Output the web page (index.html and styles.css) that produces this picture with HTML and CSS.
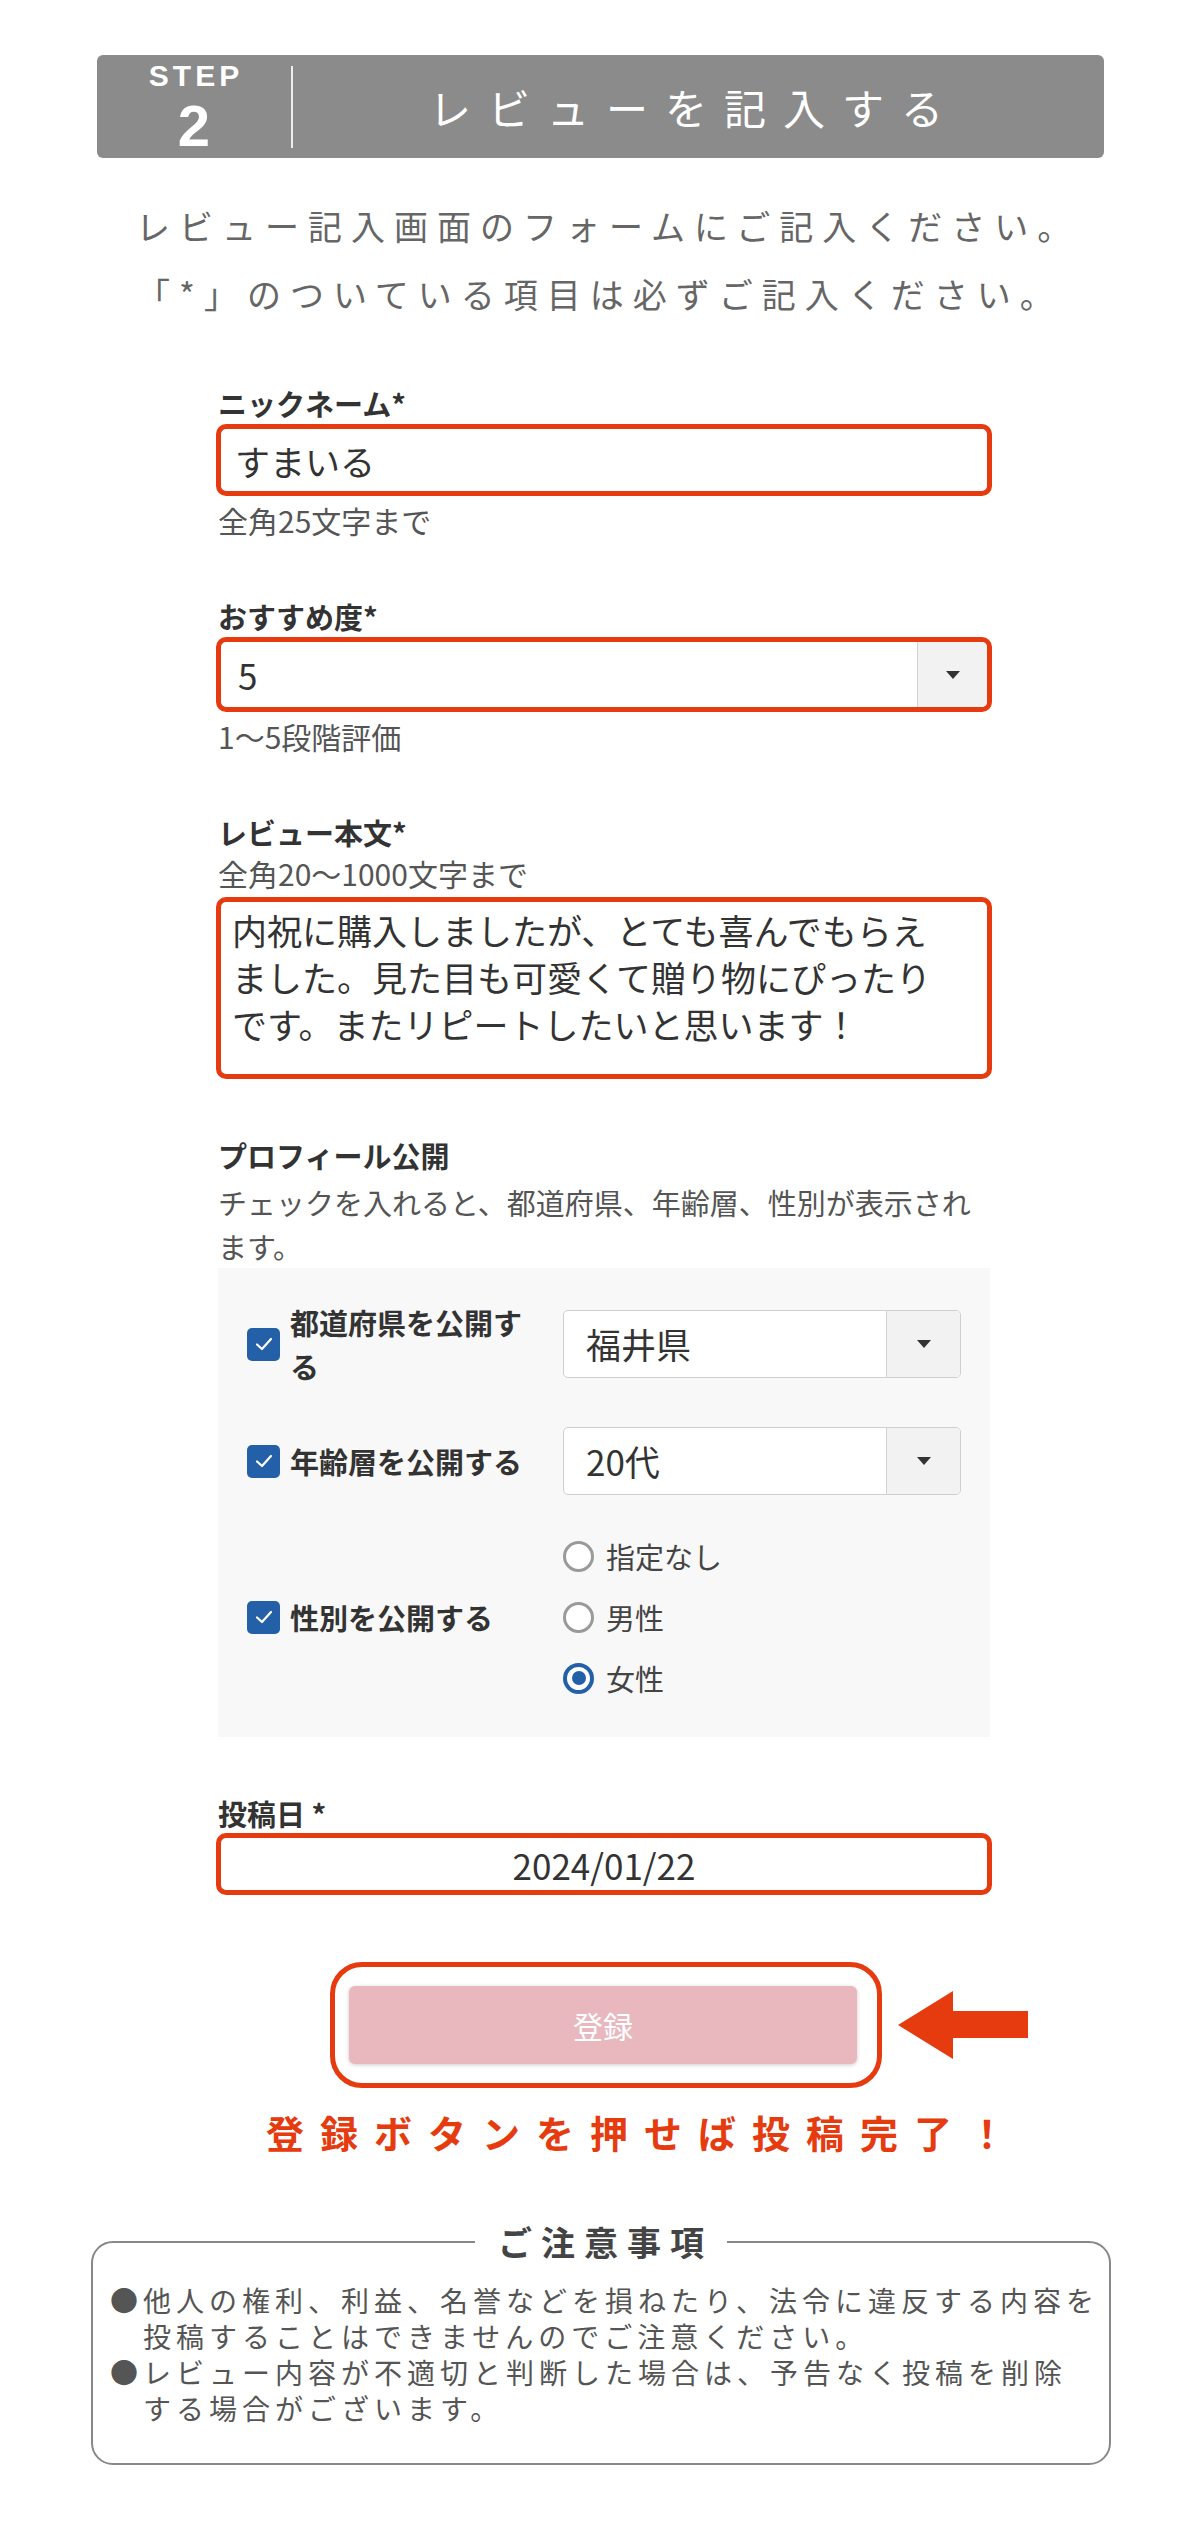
FILE: index.html
```html
<!DOCTYPE html>
<html lang="ja">
<head>
    <meta charset="UTF-8">
    <meta name="viewport" content="width=device-width, initial-scale=1.0">
    <title>レビューを記入する</title>
    <link rel="stylesheet" href="styles.css">
</head>
<body>
    <div class="step-head">
        <div class="step-num">
            <span class="step-label">STEP</span>
            <span class="step-no">2</span>
        </div>
        <div class="step-divider"></div>
        <h2 class="step-title">レビューを記入する</h2>
    </div>

    <p class="intro">レビュー記入画面のフォームにご記入ください。<br>「*」のついている項目は必ずご記入ください。</p>

    <form class="review-form">
        <div class="fields">
            <!-- Nickname -->
            <div class="field">
                <label class="field-label" for="nickname">ニックネーム*</label>
                <input type="text" id="nickname" class="text-input mark" value="すまいる">
                <p class="help">全角25文字まで</p>
            </div>

            <!-- Rating -->
            <div class="field">
                <label class="field-label">おすすめ度*</label>
                <div class="select mark">
                    <span class="select-value">5</span>
                    <span class="select-arrow"></span>
                </div>
                <p class="help">1〜5段階評価</p>
            </div>

            <!-- Review body -->
            <div class="field">
                <label class="field-label" for="review-body">レビュー本文*</label>
                <p class="help help-top">全角20〜1000文字まで</p>
                <textarea id="review-body" class="textarea mark">内祝に購入しましたが、とても喜んでもらえました。見た目も可愛くて贈り物にぴったりです。またリピートしたいと思います！</textarea>
            </div>

            <!-- Profile -->
            <div class="field">
                <span class="field-label">プロフィール公開</span>
                <p class="help-desc">チェックを入れると、都道府県、年齢層、性別が表示されます。</p>
                <div class="profile-panel">
                    <div class="profile-row">
                        <label class="check">
                            <span class="checkbox"><svg width="22" height="22" viewBox="0 0 22 22"><polyline points="4,11.5 9,16 18,6" fill="none" stroke="#fff" stroke-width="2.2" stroke-linecap="round" stroke-linejoin="round"/></svg></span>
                            <span class="check-text">都道府県を公開する</span>
                        </label>
                        <div class="select select-sm">
                            <span class="select-value">福井県</span>
                            <span class="select-arrow"></span>
                        </div>
                    </div>
                    <div class="profile-row">
                        <label class="check">
                            <span class="checkbox"><svg width="22" height="22" viewBox="0 0 22 22"><polyline points="4,11.5 9,16 18,6" fill="none" stroke="#fff" stroke-width="2.2" stroke-linecap="round" stroke-linejoin="round"/></svg></span>
                            <span class="check-text">年齢層を公開する</span>
                        </label>
                        <div class="select select-sm">
                            <span class="select-value">20代</span>
                            <span class="select-arrow"></span>
                        </div>
                    </div>
                    <div class="profile-row">
                        <label class="check">
                            <span class="checkbox"><svg width="22" height="22" viewBox="0 0 22 22"><polyline points="4,11.5 9,16 18,6" fill="none" stroke="#fff" stroke-width="2.2" stroke-linecap="round" stroke-linejoin="round"/></svg></span>
                            <span class="check-text">性別を公開する</span>
                        </label>
                        <div class="radios">
                            <label class="radio-item"><span class="radio"></span>指定なし</label>
                            <label class="radio-item"><span class="radio"></span>男性</label>
                            <label class="radio-item"><span class="radio is-checked"></span>女性</label>
                        </div>
                    </div>
                </div>
            </div>

            <!-- Post date -->
            <div class="field">
                <label class="field-label" for="post-date">投稿日 *</label>
                <input type="text" id="post-date" class="text-input date-input mark" value="2024/01/22">
            </div>
        </div>

        <div class="submit-row">
            <div class="submit-frame">
                <button type="submit" class="submit-btn">登録</button>
            </div>
            <svg class="arrow" width="130" height="68" viewBox="0 0 130 68">
                <polygon points="0,34 55,0 55,20 130,20 130,47 55,47 55,68" fill="#e63a0f"/>
            </svg>
        </div>
        <p class="submit-note">登録ボタンを押せば投稿完了！</p>
    </form>

    <fieldset class="notes">
        <legend>ご注意事項</legend>
        <ul>
            <li>●他人の権利、利益、名誉などを損ねたり、法令に違反する内容を投稿することはできませんのでご注意ください。</li>
            <li>●レビュー内容が不適切と判断した場合は、予告なく投稿を削除<br>する場合がございます。</li>
        </ul>
    </fieldset>
</body>
</html>
```

FILE: styles.css
```css
* {
    box-sizing: border-box;
}

body {
    margin: 0;
    font-family: "Noto Sans CJK JP", "Noto Sans", sans-serif;
    color: #333;
    background: #fff;
}

/* Step header */
.step-head {
    display: flex;
    align-items: center;
    height: 103px;
    margin: 55px 96px 0 97px;
    background: #8b8b8b;
    border-radius: 6px;
    color: #fff;
}

.step-num {
    width: 194px;
    display: flex;
    flex-direction: column;
    align-items: center;
    font-family: "Liberation Sans", Arial, sans-serif;
    font-weight: 700;
}

.step-label {
    font-size: 30px;
    line-height: 30px;
    letter-spacing: 4px;
    padding-left: 4px;
}

.step-no {
    font-size: 58px;
    line-height: 52px;
    margin-top: 9px;
}

.step-divider {
    width: 2px;
    height: 82px;
    background: rgba(255, 255, 255, 0.85);
}

.step-title {
    flex: 1;
    margin: 0;
    padding-right: 8px;
    font-size: 42px;
    font-weight: 400;
    letter-spacing: 17px;
    line-height: 1;
    text-align: center;
}

.intro {
    margin: 34px 0 0 136px;
    font-size: 34px;
    line-height: 68px;
    letter-spacing: 9px;
    color: #666;
}

/* Form */
.fields {
    width: 772px;
    margin: 55px 0 0 218px;
}

.field + .field {
    margin-top: 56px;
}

.field-label {
    display: block;
    font-size: 29px;
    font-weight: 700;
    line-height: 40px;
    color: #333;
}

.help {
    margin: 4px 0 0;
    font-size: 30px;
    line-height: 40px;
    color: #555;
}

.help-top {
    margin: 1px 0 4px;
}

.help-desc {
    margin: 5px 0 0;
    font-size: 29px;
    line-height: 44px;
    color: #555;
}

.mark {
    border: 5px solid #e63a0f;
    border-radius: 10px;
    margin: 1px -2px 0;
}

.text-input {
    display: block;
    width: calc(100% + 4px);
    height: 72px;
    padding: 0 14px;
    font: inherit;
    font-size: 35px;
    color: #333;
    background: #fff;
    outline: none;
}

.date-input {
    height: 62px;
    margin-top: 0;
    text-align: center;
}

.select {
    display: flex;
    height: 75px;
    overflow: hidden;
    background: #fff;
}

.select-value {
    flex: 1;
    padding-left: 17px;
    font-size: 35px;
    line-height: 65px;
    color: #333;
}

.select-arrow {
    width: 70px;
    display: flex;
    align-items: center;
    justify-content: center;
    border-left: 1px solid #d3d3d3;
    background: #f2f2f2;
}

.select-arrow::after {
    content: "";
    border-left: 7px solid transparent;
    border-right: 7px solid transparent;
    border-top: 8px solid #333;
}

.textarea {
    display: block;
    width: calc(100% + 4px);
    height: 182px;
    margin-top: 0;
    padding: 4px 40px 0 11px;
    font: inherit;
    font-size: 35px;
    line-height: 47px;
    color: #333;
    resize: none;
    outline: none;
}

/* Profile panel */
.profile-panel {
    padding: 32px 29px 37px;
    background: #f8f8f8;
}

.profile-row {
    display: grid;
    grid-template-columns: 280px 1fr;
    column-gap: 36px;
    align-items: center;
}

.profile-row + .profile-row {
    margin-top: 39px;
}

.check {
    display: flex;
    align-items: center;
    gap: 10px;
}

.checkbox {
    flex-shrink: 0;
    width: 33px;
    height: 33px;
    display: flex;
    align-items: center;
    justify-content: center;
    background: #2360a8;
    border-radius: 5px;
}

.check-text {
    font-size: 29px;
    font-weight: 700;
    line-height: 44px;
}

.select-sm {
    height: 68px;
    border: 1px solid #cfcfcf;
    border-radius: 5px;
}

.select-sm .select-value {
    padding-left: 22px;
    line-height: 66px;
}

.select-sm .select-arrow {
    width: 74px;
}

.radios {
    display: flex;
    flex-direction: column;
    gap: 17px;
}

.radio-item {
    display: flex;
    align-items: center;
    gap: 12px;
    font-size: 29px;
    line-height: 44px;
    color: #444;
}

.radio {
    width: 31px;
    height: 31px;
    display: flex;
    align-items: center;
    justify-content: center;
    border: 3px solid #9a9a9a;
    border-radius: 50%;
    background: #fff;
}

.radio.is-checked {
    border: 4px solid #2360a8;
}

.radio.is-checked::after {
    content: "";
    width: 14px;
    height: 14px;
    border-radius: 50%;
    background: #2360a8;
}

/* Submit */
.submit-row {
    display: flex;
    align-items: center;
    margin: 67px 0 0 330px;
}

.submit-frame {
    width: 552px;
    height: 126px;
    display: flex;
    align-items: center;
    padding-left: 14px;
    border: 5px solid #e63a0f;
    border-radius: 32px;
}

.submit-btn {
    width: 508px;
    height: 78px;
    border: none;
    border-radius: 6px;
    background: #e9b7be;
    box-shadow: 0 1px 4px rgba(0, 0, 0, 0.2);
    font: inherit;
    font-size: 30px;
    color: #fff;
}

.arrow {
    margin-left: 16px;
}

.submit-note {
    margin: 19px 0 0 266px;
    font-size: 38px;
    font-weight: 700;
    line-height: 50px;
    letter-spacing: 16px;
    color: #e63a0f;
}

/* Notes */
.notes {
    width: 1020px;
    margin: 63px 0 0 91px;
    padding: 18px 0 37px;
    border: 2px solid #888;
    border-radius: 22px;
    min-inline-size: 0;
}

.notes legend {
    margin: 0 auto;
    padding: 0 14px 0 23px;
    font-size: 34px;
    font-weight: 700;
    line-height: 44px;
    letter-spacing: 9px;
    color: #444;
}

.notes ul {
    margin: 0;
    padding: 0 0 0 17px;
    list-style: none;
}

.notes li {
    padding-left: 33px;
    text-indent: -33px;
    font-size: 28px;
    line-height: 36px;
    letter-spacing: 5px;
    color: #555;
}
```
